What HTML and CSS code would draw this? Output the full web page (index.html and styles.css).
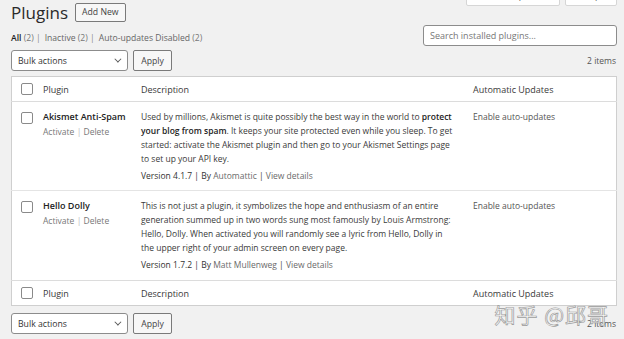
FILE: index.html
```html
<!DOCTYPE html>
<html lang="en">
<head>
  <meta charset="UTF-8">
  <title>Plugins</title>
  <link rel="stylesheet" href="styles.css">
</head>
<body>
  <div class="wrap">
    <div class="heading-row">
      <h1 class="page-title">Plugins</h1>
      <a href="#" class="button add-new">Add New</a>
      <div class="screen-meta-links">
        <button class="button meta-tab">Screen Options</button>
        <button class="button meta-tab help">Help</button>
      </div>
    </div>

    <div class="filter-row">
      <ul class="subsubsub">
        <li><a href="#" class="current">All <span class="count">(2)</span></a> |</li>
        <li><a href="#">Inactive <span class="count">(2)</span></a> |</li>
        <li><a href="#">Auto-updates Disabled <span class="count">(2)</span></a></li>
      </ul>
      <input type="search" class="search-input" placeholder="Search installed plugins...">
    </div>

    <div class="tablenav">
      <div class="bulk">
        <div class="select">Bulk actions <span class="chevron"></span></div>
        <button class="button">Apply</button>
      </div>
      <span class="items">2 items</span>
    </div>

    <table class="plugins">
      <thead>
        <tr>
          <td class="check"><span class="checkbox"></span></td>
          <th class="col-name">Plugin</th>
          <th class="col-desc">Description</th>
          <th class="col-auto">Automatic Updates</th>
        </tr>
      </thead>
      <tbody>
        <tr>
          <td class="check"><span class="checkbox"></span></td>
          <td class="col-name">
            <strong>Akismet Anti-Spam</strong>
            <div class="row-actions"><a href="#">Activate</a> <span class="sep">|</span> <a href="#">Delete</a></div>
          </td>
          <td class="col-desc">
            <p>Used by millions, Akismet is quite possibly the best way in the world to <strong>protect your blog from spam</strong>. It keeps your site protected even while you sleep. To get started: activate the Akismet plugin and then go to your Akismet Settings page to set up your API key.</p>
            <div class="meta">Version 4.1.7 | By <a href="#">Automattic</a> | <a href="#">View details</a></div>
          </td>
          <td class="col-auto"><a href="#">Enable auto-updates</a></td>
        </tr>
        <tr>
          <td class="check"><span class="checkbox"></span></td>
          <td class="col-name">
            <strong>Hello Dolly</strong>
            <div class="row-actions"><a href="#">Activate</a> <span class="sep">|</span> <a href="#">Delete</a></div>
          </td>
          <td class="col-desc">
            <p>This is not just a plugin, it symbolizes the hope and enthusiasm of an entire generation summed up in two words sung most famously by Louis Armstrong: Hello, Dolly. When activated you will randomly see a lyric from Hello, Dolly in the upper right of your admin screen on every page.</p>
            <div class="meta">Version 1.7.2 | By <a href="#">Matt Mullenweg</a> | <a href="#">View details</a></div>
          </td>
          <td class="col-auto"><a href="#">Enable auto-updates</a></td>
        </tr>
      </tbody>
      <tfoot>
        <tr>
          <td class="check"><span class="checkbox"></span></td>
          <th class="col-name">Plugin</th>
          <th class="col-desc">Description</th>
          <th class="col-auto">Automatic Updates</th>
        </tr>
      </tfoot>
    </table>

    <div class="tablenav bottom">
      <div class="bulk">
        <div class="select">Bulk actions <span class="chevron"></span></div>
        <button class="button">Apply</button>
      </div>
      <span class="items">2 items</span>
    </div>

    <div class="watermark">知乎 @邱哥</div>
  </div>
</body>
</html>
```

FILE: styles.css
```css
body {
  margin: 0;
  padding: 0;
  background-color: #f1f1f1;
  color: #3a3a3a;
  font-family: 'Open Sans', 'Noto Sans', sans-serif;
  font-size: 8.5px;
  overflow: hidden;
}

a {
  color: #6a6a6a;
  text-decoration: none;
}

.wrap {
  position: relative;
  height: 339px;
  padding: 0 7px 0 11px;
}

.button {
  display: inline-flex;
  align-items: center;
  box-sizing: border-box;
  height: 20px;
  padding: 0 6px;
  background-color: #f7f7f7;
  border: 1px solid #7a7a7a;
  border-radius: 2px;
  color: #444;
  font-family: inherit;
  font-size: 8.7px;
  cursor: pointer;
}

.heading-row {
  display: flex;
  align-items: center;
  padding-top: 2px;
  height: 20px;
}

.page-title {
  margin: 0 7px 0 0;
  font-size: 17px;
  font-weight: 400;
  color: #2a2a2a;
}

.add-new {
  height: 19px;
  font-weight: 500;
}

.screen-meta-links {
  display: flex;
  gap: 5px;
  margin-left: auto;
  align-self: flex-start;
  margin-top: -16px;
}

.meta-tab {
  height: 20px;
  background-color: #fff;
  border-color: #d6d6d6;
  color: #555;
  width: 94px;
  justify-content: center;
}

.meta-tab.help {
  width: 52px;
}

.filter-row {
  display: flex;
  justify-content: space-between;
  align-items: center;
  height: 25px;
  margin-top: 1px;
}

.subsubsub {
  display: flex;
  gap: 4px;
  margin: 4px 0 0;
  padding: 0;
  list-style: none;
  color: #888;
  font-size: 8.6px;
}

.subsubsub a {
  color: #666;
}

.subsubsub .current {
  color: #222;
  font-weight: 600;
}

.subsubsub .count {
  color: #777;
  font-weight: 400;
}

.search-input {
  box-sizing: border-box;
  width: 194px;
  height: 21px;
  padding: 0 6px;
  border: 1px solid #8c8c8c;
  border-radius: 3px;
  background: #fff;
  font-family: inherit;
  font-size: 9px;
  color: #555;
}

.search-input::placeholder {
  color: #777;
}

.tablenav {
  display: flex;
  justify-content: space-between;
  align-items: center;
  height: 25px;
}

.tablenav.bottom {
  margin-top: 5px;
}

.bulk {
  display: flex;
  gap: 5px;
}

.select {
  display: flex;
  align-items: center;
  justify-content: space-between;
  box-sizing: border-box;
  width: 117px;
  height: 21px;
  padding: 0 8px 0 6px;
  background: #fff;
  border: 1px solid #8c8c8c;
  border-radius: 3px;
  color: #333;
  font-size: 8.7px;
}

.chevron {
  width: 4px;
  height: 4px;
  border-right: 1.3px solid #555;
  border-bottom: 1.3px solid #555;
  transform: rotate(45deg) translateY(-2px);
}

.bulk .button {
  height: 21px;
  width: 39px;
  justify-content: center;
}

.items {
  color: #555;
  margin-right: 1px;
}

.plugins {
  width: 100%;
  margin-top: 3px;
  border-collapse: collapse;
  background: #fff;
  border: 1px solid #cfcfcf;
}

.plugins th,
.plugins td {
  vertical-align: top;
  text-align: left;
  font-weight: 400;
  padding: 0;
}

.plugins thead th,
.plugins tfoot th {
  height: 24px;
  vertical-align: middle;
  color: #3a3a3a;
  font-size: 9px;
}

.plugins thead tr {
  border-bottom: 1px solid #dcdcdc;
}

.plugins tfoot tr {
  border-top: 1px solid #dcdcdc;
}

.plugins tbody tr + tr {
  border-top: 1px solid #e4e4e4;
}

.check {
  width: 31px;
}

.checkbox {
  display: block;
  box-sizing: border-box;
  width: 12px;
  height: 12px;
  margin-left: 9px;
  border: 1px solid #8a8a8a;
  border-radius: 2px;
  background: #fff;
}

thead .check,
tfoot .check {
  vertical-align: middle;
}

.col-name {
  width: 98px;
}

.col-desc {
  width: 332px;
}

.plugins tbody td {
  padding-top: 8px;
  padding-bottom: 8px;
  line-height: 14px;
}

.plugins tbody tr:first-child td {
  padding-bottom: 7px;
}

.plugins tbody .check {
  padding-top: 10px;
}

.col-name strong {
  font-weight: 600;
  color: #222;
  font-size: 9px;
}

.row-actions {
  margin-top: 1px;
  color: #bbb;
}

.row-actions a {
  color: #777;
}

.col-desc p {
  width: 316px;
  margin: 0;
}

.col-desc strong {
  font-weight: 600;
  color: #222;
}

.meta {
  margin-top: 3px;
  color: #333;
}

.col-auto a {
  color: #555;
}

.watermark {
  position: absolute;
  right: 15px;
  bottom: 10px;
  font-family: 'Noto Sans CJK SC', sans-serif;
  font-size: 21px;
  color: rgba(255, 255, 255, 0.85);
  -webkit-text-stroke: 0.7px #9a9a9a;
  letter-spacing: 1px;
}
```
